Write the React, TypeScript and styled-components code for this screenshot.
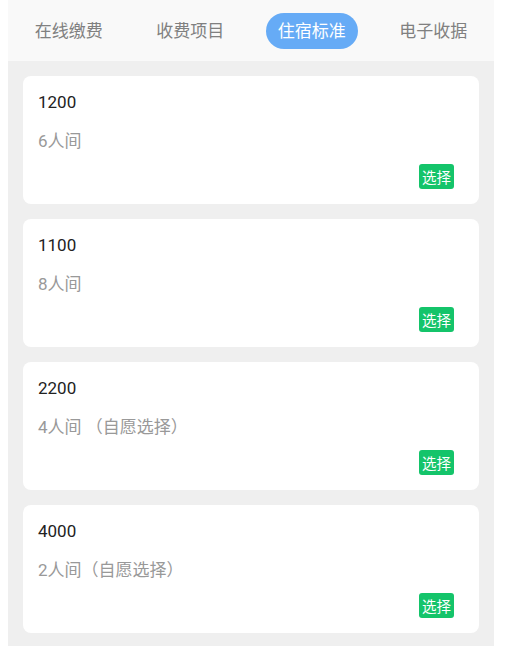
import React, { useState } from 'react';
import styled, { createGlobalStyle } from 'styled-components';

const GlobalStyle = createGlobalStyle`
  body {
    margin: 0;
    padding-left: 8px;
    background: #ffffff;
    font-family: Roboto, "Noto Sans CJK SC", sans-serif;
  }
`;

const Page = styled.div`
  width: 486px;
  min-height: 646px;
  background: #efefef;
`;

const TabBar = styled.nav`
  display: flex;
  height: 61px;
  align-items: center;
  background: #f9f9f9;
`;

const Tab = styled.div`
  flex: 1;
  display: flex;
  justify-content: center;
`;

const TabLabel = styled.span<{ $active?: boolean }>`
  height: 36px;
  line-height: 36px;
  padding: 0 12px;
  border-radius: 18px;
  font-size: 17px;
  color: ${p => (p.$active ? '#ffffff' : '#808080')};
  background: ${p => (p.$active ? '#66abf6' : 'transparent')};
`;

const List = styled.div`
  display: flex;
  flex-direction: column;
  gap: 15px;
  padding: 15px;
`;

const Card = styled.div`
  display: flex;
  flex-direction: column;
  background: #ffffff;
  border-radius: 8px;
  padding: 15px;
`;

const Price = styled.div`
  font-size: 17px;
  line-height: 22px;
  color: #222222;
`;

const Room = styled.div`
  margin-top: 17px;
  font-size: 17px;
  line-height: 22px;
  color: #999999;
`;

const Actions = styled.div`
  display: flex;
  justify-content: flex-end;
  margin-top: 12px;
  padding-right: 10px;
`;

const SelectButton = styled.button`
  height: 25px;
  padding: 0 3px;
  border: none;
  border-radius: 3px;
  background: #14c46a;
  color: #ffffff;
  font-family: "Noto Sans CJK SC", sans-serif;
  font-size: 14.5px;
  line-height: 25px;
  cursor: pointer;
`;

const TABS = ['在线缴费', '收费项目', '住宿标准', '电子收据'];

const ROOMS = [
  { price: '1200', desc: '6人间' },
  { price: '1100', desc: '8人间' },
  { price: '2200', desc: '4人间 （自愿选择）' },
  { price: '4000', desc: '2人间（自愿选择）' },
];

const App: React.FC = () => {
  const [active, setActive] = useState(2);

  return (
    <>
      <GlobalStyle />
      <Page>
        <TabBar>
          {TABS.map((t, i) => (
            <Tab key={t} onClick={() => setActive(i)}>
              <TabLabel $active={i === active}>{t}</TabLabel>
            </Tab>
          ))}
        </TabBar>
        <List>
          {ROOMS.map(r => (
            <Card key={r.price}>
              <Price>{r.price}</Price>
              <Room>{r.desc}</Room>
              <Actions>
                <SelectButton>选择</SelectButton>
              </Actions>
            </Card>
          ))}
        </List>
      </Page>
    </>
  );
};

export default App;
